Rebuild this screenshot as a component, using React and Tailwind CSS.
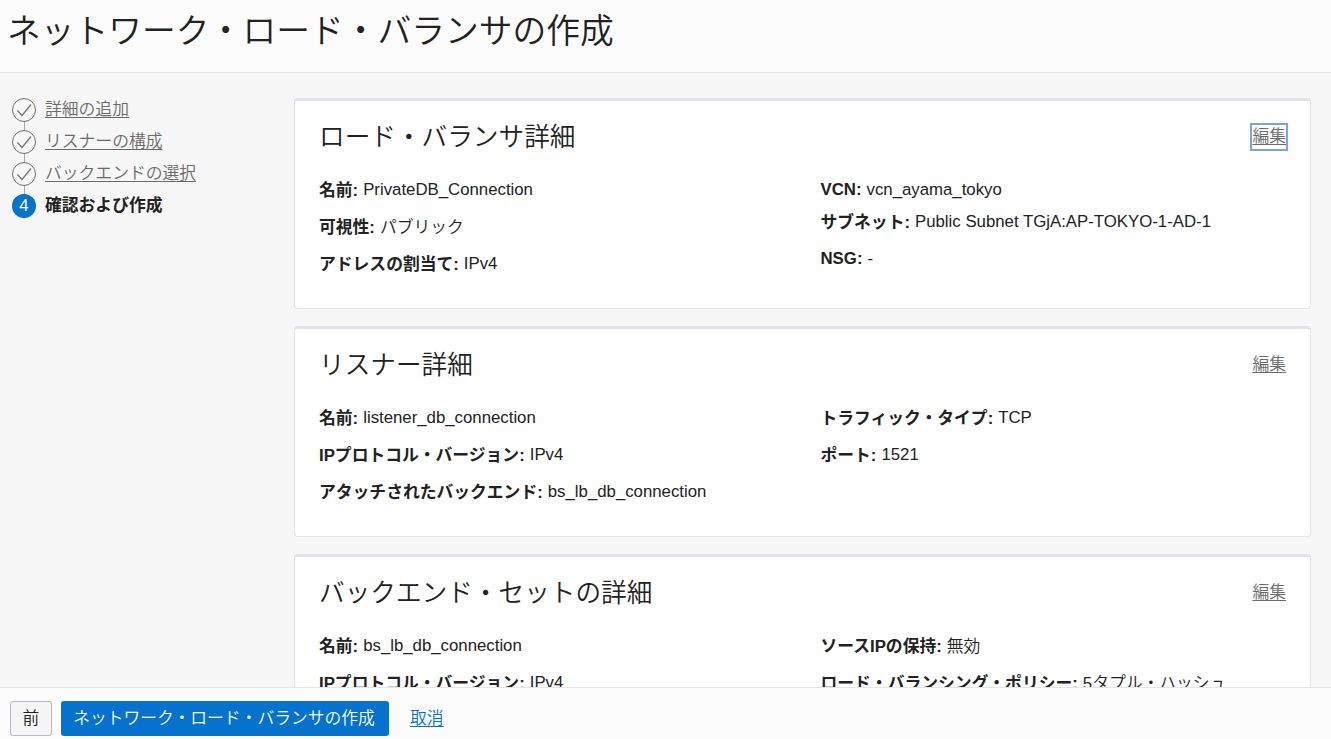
const steps = [
  { label: '詳細の追加', done: true },
  { label: 'リスナーの構成', done: true },
  { label: 'バックエンドの選択', done: true },
  { label: '確認および作成', done: false },
];

const cards = [
  {
    title: 'ロード・バランサ詳細',
    focused: true,
    left: [
      { label: '名前', value: 'PrivateDB_Connection', row: 'h-[37px]' },
      { label: '可視性', value: 'パブリック', row: 'h-[37px]' },
      { label: 'アドレスの割当て', value: 'IPv4', row: 'h-[37px]' },
    ],
    right: [
      { label: 'VCN', value: 'vcn_ayama_tokyo', row: 'h-8' },
      { label: 'サブネット', value: 'Public Subnet TGjA:AP-TOKYO-1-AD-1', row: 'h-[37px]' },
      { label: 'NSG', value: '-', row: 'h-8' },
    ],
  },
  {
    title: 'リスナー詳細',
    left: [
      { label: '名前', value: 'listener_db_connection', row: 'h-[37px]' },
      { label: 'IPプロトコル・バージョン', value: 'IPv4', row: 'h-[37px]' },
      { label: 'アタッチされたバックエンド', value: 'bs_lb_db_connection', row: 'h-[37px]' },
    ],
    right: [
      { label: 'トラフィック・タイプ', value: 'TCP', row: 'h-[37px]' },
      { label: 'ポート', value: '1521', row: 'h-[37px]' },
    ],
  },
  {
    title: 'バックエンド・セットの詳細',
    left: [
      { label: '名前', value: 'bs_lb_db_connection', row: 'h-[37px]' },
      { label: 'IPプロトコル・バージョン', value: 'IPv4', row: 'h-[37px]' },
    ],
    right: [
      { label: 'ソースIPの保持', value: '無効', row: 'h-[37px]' },
      { label: 'ロード・バランシング・ポリシー', value: '5タプル・ハッシュ', row: 'h-[37px]' },
    ],
  },
];

// Japanese text sits one pixel lower than plain Latin text
const textOffset = (text) => (/[^\x00-\x7f]/.test(text) ? 'pt-0.5' : 'pt-px');

function Field({ label, value, row }) {
  return (
    <div className={`flex gap-[5px] leading-6 ${row}`}>
      <dt className={`font-bold ${textOffset(label)}`}>{label}:</dt>
      <dd className={textOffset(value)}>{value}</dd>
    </div>
  );
}

function Card({ title, focused, left, right }) {
  return (
    <section className="h-[211px] shrink-0 rounded-[4px] border border-t-[3px] border-[#e1e3e8] bg-white pl-6 pr-[22px]">
      <div className="flex h-[76px] items-start justify-between pt-[17px]">
        <h2 className="pt-px text-[25.65px] leading-[36px] font-[350]">{title}</h2>
        <a
          href="#"
          className={`mt-[5px] border-2 leading-6 text-[#6b6b6b] underline underline-offset-2 ${
            focused ? 'border-[#76a5df]' : 'border-transparent'
          }`}
        >
          編集
        </a>
      </div>
      <div className="flex">
        <dl className="w-[501.5px]">
          {left.map((field) => (
            <Field key={field.label} {...field} />
          ))}
        </dl>
        <dl>
          {right.map((field) => (
            <Field key={field.label} {...field} />
          ))}
        </dl>
      </div>
    </section>
  );
}

function StepIcon({ done, number }) {
  if (!done) {
    return (
      <span className="flex size-6 items-center justify-center rounded-full bg-[#0572ce] text-white">
        {number}
      </span>
    );
  }
  return (
    <svg className="size-6" viewBox="0 0 24 24" fill="none" stroke="#707070">
      <circle cx="12" cy="12" r="11.5" />
      <path d="M5.5 12.5 10 17.5 19 6.5" strokeWidth="1.2" />
    </svg>
  );
}

export default function App() {
  return (
    <div className="flex h-[739px] w-[1331px] flex-col overflow-hidden bg-[#f7f7f7] font-['Liberation_Sans','Noto_Sans_CJK_JP',sans-serif] text-[16.8px] font-[350] whitespace-nowrap text-[#222]">
      <header className="h-[73px] shrink-0 border-b border-[#e5e5e5] bg-[#fcfcfc] pt-[7px] pl-[7px]">
        <h1 className="text-[33.75px] leading-[48px] font-[350]">ネットワーク・ロード・バランサの作成</h1>
      </header>

      <main className="flex min-h-0 flex-1 overflow-hidden">
        <ol className="w-[294px] shrink-0 pt-[25px] pl-3">
          {steps.map((step, i) => (
            <li key={step.label} className="flex h-8 gap-[9px]">
              <div className="flex w-6 flex-col items-center">
                <StepIcon done={step.done} number={i + 1} />
                {step.done && <span className="h-2 w-px bg-[#aaa]" />}
              </div>
              {step.done ? (
                <a href="#" className="h-6 leading-6 text-[#6b6b6b] underline underline-offset-2">
                  {step.label}
                </a>
              ) : (
                <span className="h-6 leading-6 font-bold">{step.label}</span>
              )}
            </li>
          ))}
        </ol>
        <div className="flex w-[1017px] shrink-0 flex-col gap-[17px] pt-[25px]">
          {cards.map((card) => (
            <Card key={card.title} {...card} />
          ))}
        </div>
      </main>

      <footer className="flex h-[52px] shrink-0 items-start border-t border-[#e5e5e5] bg-[#fcfcfc] pt-[13px] pl-[10px] leading-[33px]">
        <button className="h-[35px] w-[42px] rounded-[3px] border border-[#b8bcc8] bg-[#f5f5f5]">前</button>
        <button className="ml-[9px] h-[35px] w-[328px] rounded-[3px] bg-[#0572ce] pr-0.5 text-white">
          ネットワーク・ロード・バランサの作成
        </button>
        <a href="#" className="ml-[21px] pt-px text-[#0572ce] underline underline-offset-2">
          取消
        </a>
      </footer>
    </div>
  );
}
